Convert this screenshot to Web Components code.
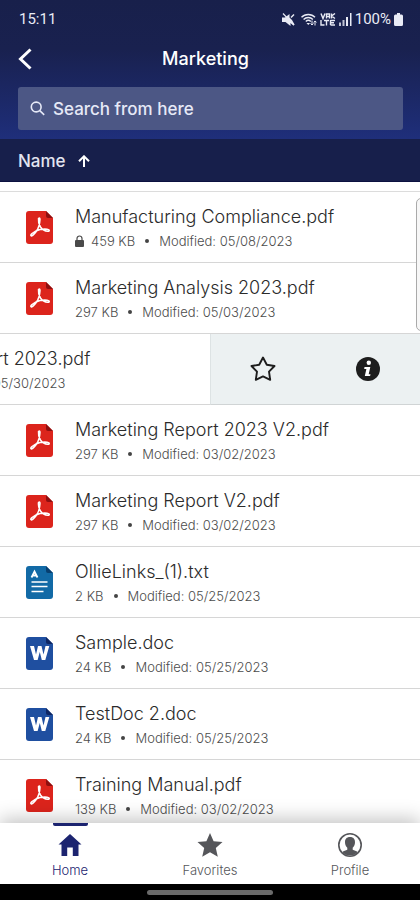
<!DOCTYPE html>
<html lang="en">
<head>
<meta charset="utf-8">
<meta name="viewport" content="width=device-width, initial-scale=1">
<title>Marketing</title>
<style>
  html, body { height: 100%; }
  body { margin: 0; background: #fff; font-family: Inter, "Liberation Sans", sans-serif; }
</style>
</head>
<body>
<files-app></files-app>
<script>
const define = (name, html) => {
  const template = document.createElement('template');
  template.innerHTML = `<style>*{box-sizing:border-box}svg{display:block}</style>` + html;
  return class extends HTMLElement {
    constructor() {
      super();
      this.attachShadow({ mode: 'open' }).append(template.content.cloneNode(true));
    }
    $(selector) { return this.shadowRoot.querySelector(selector); }
  };
};

customElements.define('status-bar', define('status-bar', `
  <style>
    :host { display: flex; align-items: center; justify-content: space-between; height: 38px; padding: 0 17px 0 19px; color: #e9ebf5; font-size: 15px; line-height: 20px; font-family: Roboto, sans-serif; }
    .icons { display: flex; align-items: center; gap: 3px; }
    .mute { margin-right: 3px; }
  </style>
  <span>15:11</span>
  <div class="icons">
    <svg class="mute" width="13" height="13" viewBox="0 0 13 13" fill="currentColor"><path d="M0 4.500h3L7.500 1v3.500L10 7l2.500 4.500-1 1L8.500 10v3L3.500 9H0z"/><path d="M1 .5l11 11.500" stroke="currentColor" stroke-width="1.200"/><path d="M9 4.500l3-3" stroke="currentColor" stroke-width="1.400"/></svg>
    <svg width="16" height="13" viewBox="0 0 16 13" fill="none" stroke="currentColor" stroke-width="1.400"><path d="M.5 4.200C4 .5 10.500.5 14 4.200M2.600 6.500c2.500-2.600 6.800-2.600 9.300 0M4.800 8.600c1.400-1.400 3.600-1.400 5 0"/><path d="M7.300 12L5.500 10h3.600z" fill="currentColor" stroke="none"/><path d="M11 7.500V12M9.500 10.500L11 12l1.500-1.500M14 12.500V8M12.600 9.300L14 8l1.500 1.300" stroke-width="1"/></svg>
    <svg width="16" height="13" viewBox="0 0 16 13" fill="none" stroke="currentColor" stroke-width="1.400"><path d="M1 .5l2 5 2-5M6.500 5.500V1h3v4.500M6.500 3.500h3M11.500 .5v5M11.500 3l3.500-2.500M11.500 3l3.500 2.500M1 7v5h3.500M4 7.500h5M6.500 7.500V12.500M10.500 7.500h4.500M10.500 9.700H14M10.500 12h4.500M10.500 7v5"/></svg>
    <svg width="13" height="13" viewBox="0 0 13 13" fill="currentColor"><path d="M0 9.500h2V13H0zM3.500 7h2v6h-2z" opacity=".8"/><path d="M7 4h2v9H7zM11 0h1.500v13H11z"/></svg>
    <span>100%</span>
    <svg width="9" height="13" viewBox="0 0 9 13" fill="currentColor"><path d="M3 0h3v1.500h1.500Q9 1.500 9 3v8.500Q9 13 7.500 13h-6Q0 13 0 11.500V3q0-1.500 1.500-1.500H3z"/></svg>
  </div>
`));

customElements.define('title-bar', define('title-bar', `
  <style>
    :host { display: grid; grid-template-columns: 32px 1fr 32px; align-items: center; height: 42px; padding: 0 18px 0 9px; color: #fff; }
    h1 { margin: 0; font-size: 18px; line-height: 24px; font-weight: 500; text-align: center; }
    button { display: grid; place-items: center; width: 32px; height: 32px; padding: 0; border: 0; background: none; color: inherit; }
  </style>
  <button aria-label="Back"><svg width="14" height="22" viewBox="0 0 14 22" fill="none" stroke="currentColor" stroke-width="3"><path d="M12.500 1.500L2.500 11l10 9.500"/></svg></button>
  <h1><slot></slot></h1>
`));

customElements.define('search-box', define('search-box', `
  <style>
    :host { display: block; padding: 7px 17px 9px 18px; }
    label { display: flex; align-items: center; gap: 8px; height: 43px; padding: 0 12px; border-radius: 3px; background: #4c5785; color: #e6e9f7; }
    input { flex: 1; min-width: 0; padding: 0; border: 0; outline: 0; background: none; color: inherit; font: 500 17px/24px Inter, sans-serif; }
    input::placeholder { color: inherit; opacity: 1; }
  </style>
  <label>
    <svg width="15" height="15" viewBox="0 0 15 15" fill="none" stroke="currentColor" stroke-width="1.600"><circle cx="6.200" cy="6" r="4.900"/><path d="M9.800 9.600l4.400 4.200"/></svg>
    <input type="search" placeholder="Search from here" aria-label="Search from here">
  </label>
`));

customElements.define('sort-bar', define('sort-bar', `
  <style>
    :host { display: flex; align-items: center; height: 43px; padding: 2px 18px 0; background: #171f4b; border-bottom: 1px solid #0c1140; color: #e3e5f0; }
    button { display: flex; align-items: center; gap: 12px; padding: 0; border: 0; background: none; color: inherit; font: 500 17px/24px Inter, sans-serif; }
  </style>
  <button><slot></slot><svg width="12" height="12" viewBox="0 0 12 12" fill="none" stroke="#fff" stroke-width="2"><path d="M6 12V1.500M1 6.300l5-5 5 5"/></svg></button>
`));

const page = (fill, fold, art) => `<svg width="27" height="33" viewBox="0 0 27 33"><path d="M3 0h17l7 7v23q0 3-3 3H3q-3 0-3-3V3q0-3 3-3z" fill="${fill}"/><path d="M20 0l7 7h-5q-2 0-2-2z" fill="${fold}"/>${art}</svg>`;
const FILE_ICONS = {
  pdf: page('#dc241c', '#8d0f10', '<g fill="none" stroke="#fff" stroke-linecap="round" stroke-linejoin="round" stroke-width="1.500"><path d="M12.500 7.500Q14 6 14 8.500Q13.500 15 11.500 18.500Q8 24 5.500 25Q3.800 24.500 6 22.500Q10 19.500 14 18.500Q20 17.300 23 18.800Q24 20.300 21.500 20.200Q17.500 20 14.500 16Q12 12 12.500 7.500z"/></g>'),
  txt: page('#126aa6', '#083f70', '<g fill="none" stroke="#fff"><path d="M5.500 11.500L8.500 5.500L11.500 11.500M7 9.500h3.500" stroke-width="1.800"/><path d="M5.500 16h16M5.500 20.500h16M5.500 25.500h12" stroke-width="1.500"/></g>'),
  doc: page('#1f4fa0', '#0e2663', '<path d="M4 9h4l2 8.500L12 9h3.500l2 8.500 2-8.500h3.800l-4 14h-3.500l-2-8-2.200 8H8z" fill="#fff"/>')
};

customElements.define('file-row', class extends define('file-row', `
  <style>
    :host { display: flex; align-items: center; height: 71px; padding: 0 26px; border-bottom: 1px solid #d6d6d6; background: #fff; }
    .icon { flex: none; width: 49px; }
    .name { margin: 0; font-size: 18px; line-height: 24px; font-weight: 300; color: #2b2b2b; white-space: nowrap; }
    .meta { display: flex; align-items: center; margin-top: 3px; font-size: 13px; line-height: 18px; font-weight: 300; color: #4c4c4c; white-space: nowrap; }
    .text { padding-top: 1px; }
    .lock { margin-right: 7px; color: #4a4a4a; }
    .dot { width: 4px; height: 4px; margin: 0 10px; border-radius: 50%; background: #444; }
    [hidden] { display: none; }
  </style>
  <div class="icon"></div>
  <div class="text">
    <h2 class="name"><slot></slot></h2>
    <div class="meta">
      <svg class="lock" hidden width="9" height="12" viewBox="0 0 9 12" role="img" aria-label="Locked"><path d="M2 6V3.500a2.500 2.500 0 0 1 5 0V6" fill="none" stroke="currentColor" stroke-width="1.200"/><rect y="5" width="9" height="7" rx="1" fill="currentColor"/></svg>
      <span class="size"></span><i class="dot"></i><span class="date"></span>
    </div>
  </div>
`) {
  connectedCallback() {
    this.setAttribute('role', 'listitem');
    this.$('.icon').innerHTML = FILE_ICONS[this.getAttribute('type')];
    this.$('.size').textContent = this.getAttribute('size');
    this.$('.date').textContent = 'Modified: ' + this.getAttribute('modified');
    if (this.hasAttribute('locked')) this.$('.lock').removeAttribute('hidden');
  }
});

customElements.define('swiped-row', define('swiped-row', `
  <style>
    :host { display: flex; justify-content: flex-end; overflow: hidden; }
    ::slotted(file-row) { flex: 0 0 100%; }
    .actions { flex: 0 0 50%; display: grid; grid-template-columns: 1fr 1fr; background: #ecf1f2; border-left: 1px solid #dde3e4; border-bottom: 1px solid #d0d4d5; }
    button { display: grid; place-items: center; padding: 0; border: 0; background: none; color: #1d1d1d; }
  </style>
  <slot></slot>
  <div class="actions">
    <button aria-label="Add to favorites"><svg width="26" height="26" viewBox="0 0 26 26" fill="none" stroke="currentColor" stroke-width="1.900" stroke-linejoin="round"><path d="M13 1.500l3.800 7.300 7.700 1.200-5.500 5.700 1.200 8.100L13 20.400l-7.200 3.400L7 15.700 1.500 10l7.700-1.200z"/></svg></button>
    <button aria-label="File details"><svg width="24" height="24" viewBox="0 0 24 24"><circle cx="12" cy="12" r="12" fill="currentColor"/><circle cx="12.800" cy="5.800" r="2.200" fill="#fff"/><path d="M8.500 10h5.800l-1.600 7.200h1.800l-.4 1.900H8.800l1.600-7.200H8.200z" fill="#fff"/></svg></button>
  </div>
`));

customElements.define('file-list', define('file-list', `
  <style>
    :host { display: block; position: relative; flex: 1; min-height: 0; overflow: hidden; background: #fff; }
    .lead { height: 10px; border-bottom: 1px solid #dcdcdc; }
    .edge { position: absolute; top: 16px; right: -6px; width: 10px; height: 133px; border: 1px solid #aaa; border-radius: 5px; background: #f7f7f7; }
  </style>
  <div class="lead"></div>
  <div role="list"><slot></slot></div>
  <div class="edge"></div>
`));

const TAB_ICONS = {
  home: '<path d="M13 2L24.500 12.500h-3V24h-5.700v-8.500h-5.600V24H4.500V12.500h-3z"/>',
  star: '<path d="M13 1l3.600 8.200 8.900.9-6.700 5.900 2 8.700L13 20.200l-7.800 4.500 2-8.700L.5 10.100l8.900-.9z"/>',
  profile: '<circle cx="13" cy="13" r="11.200" fill="none" stroke="currentColor" stroke-width="1.600"/><path d="M13 5c3.500 0 5 2.200 5 5.200 0 2.500-1 4.300-2.300 5.500v2c1.500.8 3.600 1.200 5 2.300-4 4.800-11.400 4.800-15.400 0 1.400-1.100 3.500-1.500 5-2.300v-2C9 14.500 8 12.700 8 10.200 8 7.200 9.500 5 13 5z"/>'
};

customElements.define('nav-tab', class extends define('nav-tab', `
  <style>
    :host { display: flex; flex: 1; justify-content: center; color: #55565a; }
    :host([current]) { color: #1c2470; }
    a { display: flex; flex-direction: column; align-items: center; color: inherit; text-decoration: none; font-size: 13px; line-height: 16px; font-weight: 300; }
    .mark { width: 35px; height: 3px; margin-bottom: 6px; border-radius: 0 0 2px 2px; }
    :host([current]) .mark { background: #1c2470; }
    svg { margin-bottom: 4px; }
  </style>
  <a href="#"><i class="mark"></i><svg width="26" height="26" viewBox="0 0 26 26" fill="currentColor"></svg><slot></slot></a>
`) {
  connectedCallback() {
    this.$('svg').innerHTML = TAB_ICONS[this.getAttribute('icon')];
    this.$('a').href = '#' + this.getAttribute('icon');
    if (this.hasAttribute('current')) this.$('a').setAttribute('aria-current', 'page');
  }
});

customElements.define('bottom-nav', define('bottom-nav', `
  <style>
    :host { display: block; position: relative; }
    nav { display: flex; height: 61px; background: #fff; box-shadow: 0 -4px 18px rgba(0,0,0,.24); }
    .system { position: relative; display: grid; place-items: center; height: 16px; background: #000; }
    .system i { width: 30%; height: 5px; border-radius: 3px; background: #6a6a6a; }
  </style>
  <nav><slot></slot></nav>
  <div class="system"><i></i></div>
`));

customElements.define('files-app', define('files-app', `
  <style>
    :host { display: flex; flex-direction: column; height: 100vh; overflow: hidden; }
    header { background: linear-gradient(#18204b 0, #19214f 35%, #1d2b70 85%, #1f2f7b 100%); }
  </style>
  <header>
    <status-bar></status-bar>
    <title-bar>Marketing</title-bar>
    <search-box></search-box>
  </header>
  <sort-bar>Name</sort-bar>
  <file-list>
    <file-row type="pdf" size="459 KB" modified="05/08/2023" locked>Manufacturing Compliance.pdf</file-row>
    <file-row type="pdf" size="297 KB" modified="05/03/2023">Marketing Analysis 2023.pdf</file-row>
    <swiped-row><file-row type="pdf" size="297 KB" modified="05/30/2023">Marketing Report 2023.pdf</file-row></swiped-row>
    <file-row type="pdf" size="297 KB" modified="03/02/2023">Marketing Report 2023 V2.pdf</file-row>
    <file-row type="pdf" size="297 KB" modified="03/02/2023">Marketing Report V2.pdf</file-row>
    <file-row type="txt" size="2 KB" modified="05/25/2023">OllieLinks_(1).txt</file-row>
    <file-row type="doc" size="24 KB" modified="05/25/2023">Sample.doc</file-row>
    <file-row type="doc" size="24 KB" modified="05/25/2023">TestDoc 2.doc</file-row>
    <file-row type="pdf" size="139 KB" modified="03/02/2023">Training Manual.pdf</file-row>
  </file-list>
  <bottom-nav>
    <nav-tab icon="home" current>Home</nav-tab>
    <nav-tab icon="star">Favorites</nav-tab>
    <nav-tab icon="profile">Profile</nav-tab>
  </bottom-nav>
`));
</script>
</body>
</html>
